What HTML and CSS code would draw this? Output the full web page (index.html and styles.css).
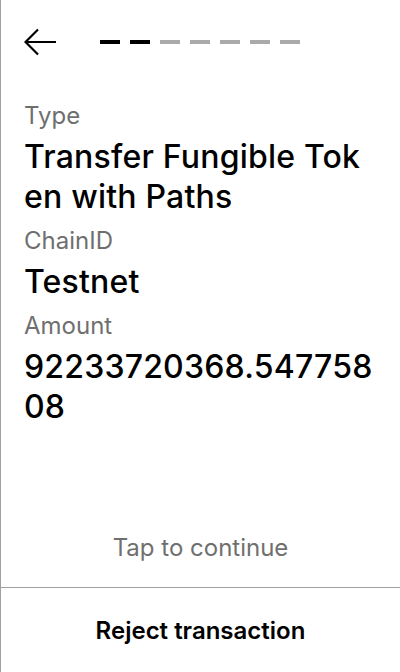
FILE: index.html
```html
<!DOCTYPE html>
<html>
<head>
<meta charset="utf-8">
<link rel="stylesheet" href="styles.css">
</head>
<body>
<div class="screen">
  <div class="header">
    <svg class="back" width="32" height="28" viewBox="0 0 32 28">
      <path d="M32 14 H2 M14 1.5 L1.5 14 L14 26.5" fill="none" stroke="#000" stroke-width="2.2"/>
    </svg>
    <div class="steps">
      <span class="step done"></span>
      <span class="step done"></span>
      <span class="step"></span>
      <span class="step"></span>
      <span class="step"></span>
      <span class="step"></span>
      <span class="step"></span>
    </div>
  </div>
  <div class="content">
    <div class="label">Type</div>
    <div class="value">Transfer Fungible Tok<br>en with Paths</div>
    <div class="label">ChainID</div>
    <div class="value">Testnet</div>
    <div class="label">Amount</div>
    <div class="value">92233720368.547758<br>08</div>
  </div>
  <div class="tap">Tap to continue</div>
  <div class="footer">Reject transaction</div>
</div>
</body>
</html>
```
FILE: styles.css
```css
html, body {
  margin: 0;
  padding: 0;
  background: #fff;
}
body {
  font-family: Inter, "Noto Sans", sans-serif;
  color: #000;
}
.screen {
  width: 400px;
  height: 672px;
  box-sizing: border-box;
  border-left: 1px solid #a0a0a0;
  display: flex;
  flex-direction: column;
}
.header {
  display: flex;
  align-items: center;
  padding: 28px 0 0 23px;
  height: 28px;
}
.back {
  display: block;
  margin-right: 44px;
}
.steps {
  display: flex;
  gap: 10px;
}
.step {
  width: 20px;
  height: 4px;
  background: #aaaaaa;
}
.step.done {
  background: #000;
}
.content {
  flex: 1;
  padding: 44px 20px 0 23px;
}
.label {
  font-size: 24px;
  line-height: 32px;
  color: #6f6f6f;
  margin-bottom: 5px;
}
.value {
  font-size: 32px;
  line-height: 40px;
  font-weight: 500;
  letter-spacing: 0.2px;
  word-break: break-all;
  margin-bottom: 8px;
}
.tap {
  font-size: 24px;
  line-height: 32px;
  color: #6f6f6f;
  text-align: center;
  padding-bottom: 23px;
}
.footer {
  height: 84px;
  border-top: 1px solid #a0a0a0;
  display: flex;
  align-items: center;
  justify-content: center;
  font-size: 24px;
  font-weight: 600;
}
```
